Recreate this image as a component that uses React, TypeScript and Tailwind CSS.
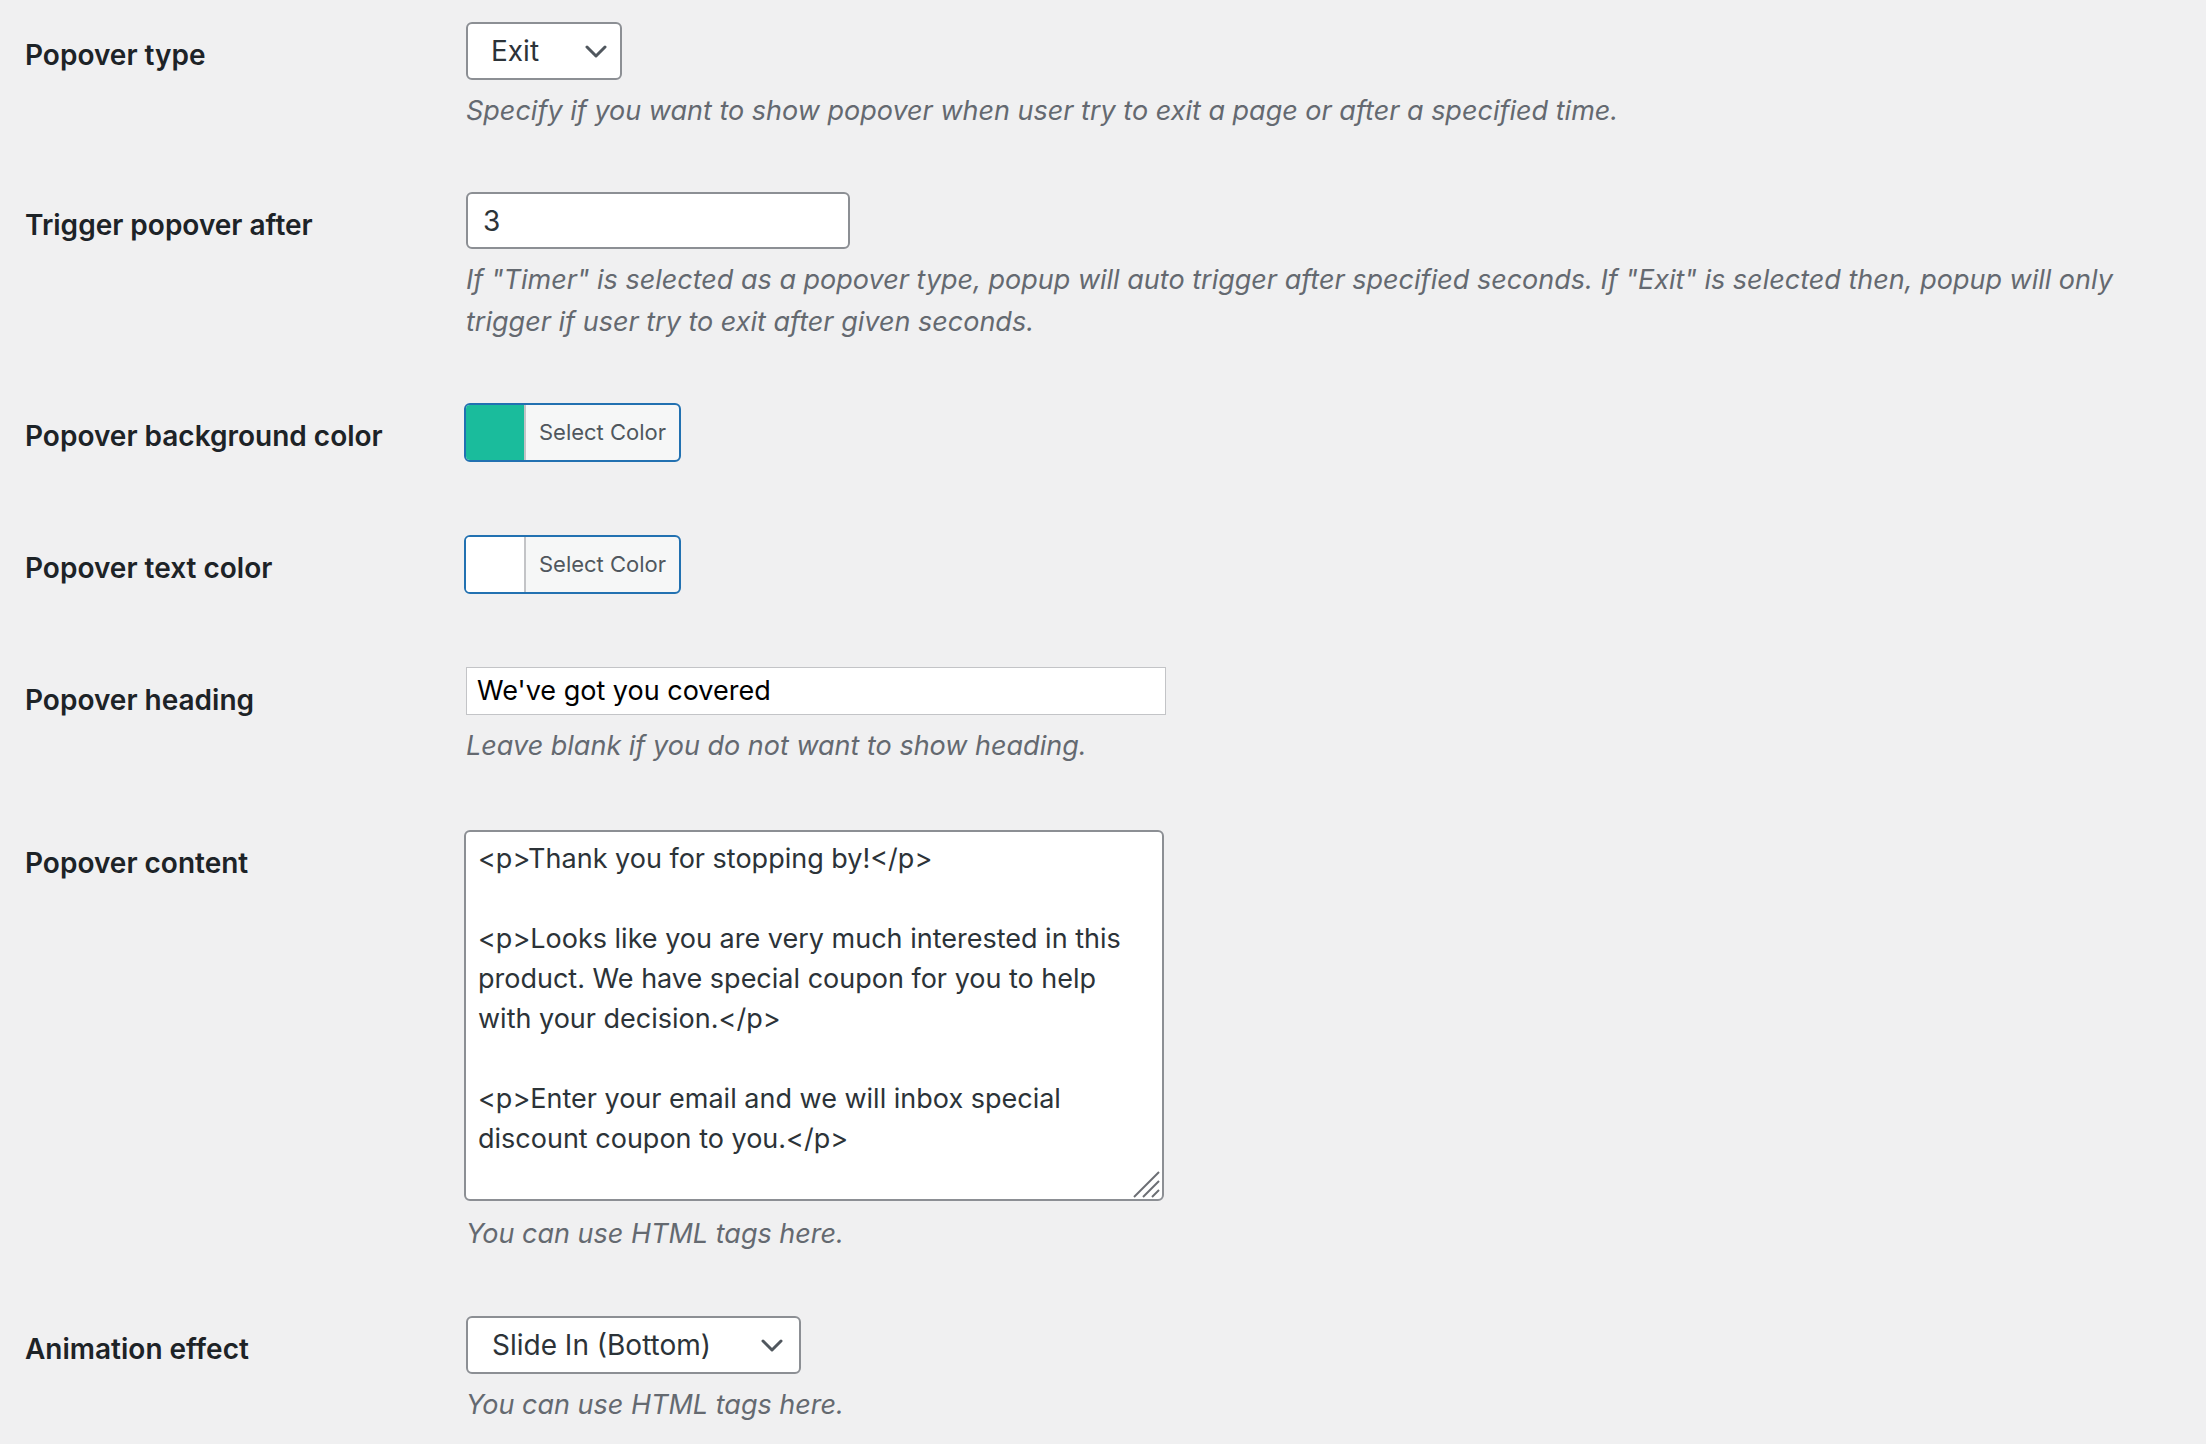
import React from 'react';

const font = { fontFamily: 'Inter, "Noto Sans", "Liberation Sans", sans-serif' };

function Chevron() {
    return (
        <svg width="22" height="13" viewBox="0 0 22 13" fill="none" className="shrink-0">
            <polyline points="2,2 11,11 20,2" stroke="#50575e" strokeWidth="3" strokeLinecap="round" strokeLinejoin="round" />
        </svg>
    );
}

function Row({ label, last, children }: { label: string; last?: string; children: React.ReactNode }) {
    return (
        <div className={`flex min-h-[132px] ${last ?? 'pb-[60px]'}`}>
            <div className="w-[441px] shrink-0 pt-[13px]">
                <span className="block text-[28px] leading-[40px] font-semibold text-[#1d2327]">{label}</span>
            </div>
            <div className="flex-1 flex flex-col items-start">{children}</div>
        </div>
    );
}

function Desc({ children }: { children: React.ReactNode }) {
    return <p className="mt-[10px] text-[27px] leading-[42px] italic text-[#646970]">{children}</p>;
}

function ColorPicker({ swatch }: { swatch: string }) {
    return (
        <button className="flex h-[59px] w-[217px] overflow-hidden rounded-[6px] border-2 border-[#2271b1] bg-[#f6f7f7]">
            <span className={`h-full w-[60px] border-r-2 border-[#c3c4c7] ${swatch}`} />
            <span className="flex-1 flex items-center justify-center text-[22px] text-[#50575e]">Select Color</span>
        </button>
    );
}

export default function App() {
    return (
        <div style={font} className="min-h-screen w-full bg-[#f0f0f1] pl-[25px] pt-[22px]">
            <Row label="Popover type">
                <div className="flex h-[58px] w-[156px] items-center justify-between rounded-[6px] border-2 border-[#8c8f94] bg-white pl-[23px] pr-[13px]">
                    <span className="text-[28px] text-[#2c3338]">Exit</span>
                    <Chevron />
                </div>
                <Desc>Specify if you want to show popover when user try to exit a page or after a specified time.</Desc>
            </Row>

            <Row label="Trigger popover after">
                <div className="flex h-[57px] w-[384px] items-center rounded-[6px] border-2 border-[#8c8f94] bg-white pl-[15px]">
                    <span className="text-[28px] text-[#2c3338]">3</span>
                </div>
                <Desc>
                    If "Timer" is selected as a popover type, popup will auto trigger after specified seconds. If "Exit" is selected then, popup will only
                    <br />
                    trigger if user try to exit after given seconds.
                </Desc>
            </Row>

            <Row label="Popover background color">
                <div className="-ml-[2px]">
                    <ColorPicker swatch="bg-[#1abc9c]" />
                </div>
            </Row>

            <Row label="Popover text color">
                <div className="-ml-[2px]">
                    <ColorPicker swatch="bg-white" />
                </div>
            </Row>

            <Row label="Popover heading" last="pb-[63px]">
                <div className="flex h-[48px] w-[700px] items-center border border-[#c3c4c7] bg-white pl-[10px]">
                    <span className="text-[27px] text-black">We've got you covered</span>
                </div>
                <Desc>Leave blank if you do not want to show heading.</Desc>
            </Row>

            <Row label="Popover content" last="pb-[61px]">
                <div className="relative -ml-[2px] h-[371px] w-[700px] rounded-[6px] border-2 border-[#8c8f94] bg-white px-[12px] pt-[7px] text-[27px] leading-[40px] text-[#2c3338] whitespace-nowrap">
                    <div>&lt;p&gt;Thank you for stopping by!&lt;/p&gt;</div>
                    <div>&nbsp;</div>
                    <div>&lt;p&gt;Looks like you are very much interested in this</div>
                    <div>product. We have special coupon for you to help</div>
                    <div>with your decision.&lt;/p&gt;</div>
                    <div>&nbsp;</div>
                    <div>&lt;p&gt;Enter your email and we will inbox special</div>
                    <div>discount coupon to you.&lt;/p&gt;</div>
                    <svg width="28" height="28" viewBox="0 0 28 28" className="absolute bottom-[1px] right-[1px]">
                        <line x1="26" y1="2" x2="1" y2="27" stroke="#6b6e73" strokeWidth="2" />
                        <line x1="26" y1="11" x2="10" y2="27" stroke="#6b6e73" strokeWidth="2" />
                        <line x1="26" y1="20" x2="19" y2="27" stroke="#6b6e73" strokeWidth="2" />
                    </svg>
                </div>
                <p className="mt-[12px] text-[27px] leading-[42px] italic text-[#646970]">You can use HTML tags here.</p>
            </Row>

            <Row label="Animation effect">
                <div className="flex h-[58px] w-[335px] items-center justify-between rounded-[6px] border-2 border-[#8c8f94] bg-white pl-[24px] pr-[16px]">
                    <span className="text-[28px] text-[#2c3338]">Slide In (Bottom)</span>
                    <Chevron />
                </div>
                <Desc>You can use HTML tags here.</Desc>
            </Row>
        </div>
    );
}
